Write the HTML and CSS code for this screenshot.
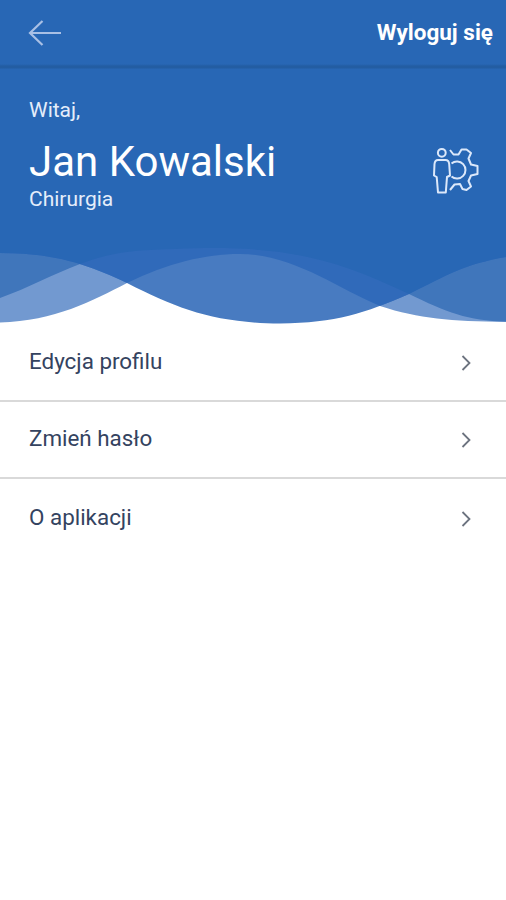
FILE: index.html
```
<!DOCTYPE html>
<html lang="pl">
<head>
  <meta charset="UTF-8">
  <title>Profil</title>
  <meta name="viewport" content="width=device-width, initial-scale=1">
  <link rel="stylesheet" href="styles.css">
</head>
<body>
  <header class="topbar">
    <a class="back" href="#" aria-label="Wstecz">
      <svg width="34" height="28" viewBox="0 0 34 28">
        <path d="M33 14H2M14.500 2L2 14l12.500 12"/>
      </svg>
    </a>
    <a class="logout" href="#">Wyloguj się</a>
  </header>

  <section class="profile">
    <div class="user">
      <p class="hello">Witaj,</p>
      <h1>Jan Kowalski</h1>
      <p class="department">Chirurgia</p>
    </div>
    <svg class="user-icon" width="48" height="48" viewBox="0 0 48 48">
      <circle cx="9.800" cy="5.800" r="3.900"/>
      <path d="M6 13h7.500q3.300 0 3.700 4l.8 11.500-3 1.500-1.200 15.500H6L4.700 30 2 28.500 2.500 17q.4-4 3.500-4z"/>
      <path d="M18 3L21.500 7.500L26.500 7.500L29.500 2.500L34.500 2.500L39 6L36.500 11.500L39 17.500L45.500 19L45.500 27L39 28.500L36.500 34L39 39.500L34.500 43L30.500 42L28 37L22.500 37.500L18 43"/>
      <path d="M19.500 16.500a8.500 8.500 0 1 1 0 13"/>
    </svg>
  </section>

  <!-- fale pod nagłówkiem -->
  <svg class="waves" width="506" height="90" viewBox="0 235 506 90">
    <defs>
      <clipPath id="front">
        <path d="M0 235V253C58 253 91 266 127 283C178 309 215 323 280 323.500C336 323 365 313 409 294C447 275 465 264 506 257V235z"/>
      </clipPath>
    </defs>
    <path class="wave-light" d="M0 235V322.500C55 321 92 301 127 283C168 263 205 254 240 254C292 254 335 287 380 306C420 319 450 321 506 322V235z"/>
    <path class="wave-mid" d="M0 235V298C28 288 53 274 80 264C112 252 135 250 175 249C285 244 335 259 409 294C446 312 468 321 506 321.500V235z"/>
    <g clip-path="url(#front)">
      <path class="wave-front" d="M0 235h506v90H0z"/>
      <path class="wave-deep" d="M0 235V322.500C55 321 92 301 127 283C168 263 205 254 240 254C292 254 335 287 380 306C420 319 450 321 506 322V235z"/>
      <path class="wave-base" d="M0 235V298C28 288 53 274 80 264C112 252 135 250 175 249C285 244 335 259 409 294C446 312 468 321 506 321.500V235z"/>
    </g>
  </svg>

  <nav class="menu">
    <a href="#">Edycja profilu
      <svg width="10" height="16" viewBox="0 0 10 16"><path d="M1.500 1L8.500 8l-7 7"/></svg>
    </a>
    <a href="#">Zmień hasło
      <svg width="10" height="16" viewBox="0 0 10 16"><path d="M1.500 1L8.500 8l-7 7"/></svg>
    </a>
    <a href="#">O aplikacji
      <svg width="10" height="16" viewBox="0 0 10 16"><path d="M1.500 1L8.500 8l-7 7"/></svg>
    </a>
  </nav>
</body>
</html>
```
FILE: styles.css
```
* {
  box-sizing: border-box;
}
body {
  margin: 0;
  background: #fff;
  font-family: Roboto, sans-serif;
}
a {
  color: inherit;
  text-decoration: none;
}
svg {
  display: block;
  fill: none;
}
.topbar {
  display: flex;
  justify-content: space-between;
  align-items: center;
  height: 69px;
  padding: 0 13px 4px 28px;
  background: linear-gradient(#2867b5 64px, #235da2 66px, #235da2 68px, #2867b5 69px);
  color: #fff;
}
.back svg {
  stroke: #a9c0e5;
  stroke-width: 2.2;
}
.logout {
  margin-top: -2px;
  font-size: 22.500px;
  font-weight: 700;
}
.profile {
  display: flex;
  justify-content: space-between;
  height: 166px;
  padding: 28px 26px 0 29px;
  background: #2867b5;
  color: #fff;
}
.profile p {
  margin: 0;
  font-size: 21px;
  line-height: 26px;
  color: #e4edfa;
}
h1 {
  margin: 13px 0 0;
  font-size: 42px;
  font-weight: 400;
  line-height: 52px;
}
.profile .department {
  margin-top: -2px;
}
.user-icon {
  margin-top: 50px;
  stroke: #dce8fa;
  stroke-width: 2;
  stroke-linejoin: round;
}
.wave-light {
  fill: #7299d0;
}
.wave-mid {
  fill: #4076bb;
}
.wave-front {
  fill: #487bc1;
}
.wave-deep {
  fill: #306aba;
}
.wave-base {
  fill: #2867b5;
}
.menu a {
  display: flex;
  justify-content: space-between;
  align-items: center;
  height: 77px;
  padding: 0 35px 3px 29px;
  border-bottom: 2px solid #d9d9d9;
  font-size: 22.400px;
  color: #34435f;
}
.menu a:last-child {
  height: 79px;
  border-bottom: 0;
}
.menu svg {
  margin-top: 3px;
  stroke: #6c737f;
  stroke-width: 1.8;
}
```
